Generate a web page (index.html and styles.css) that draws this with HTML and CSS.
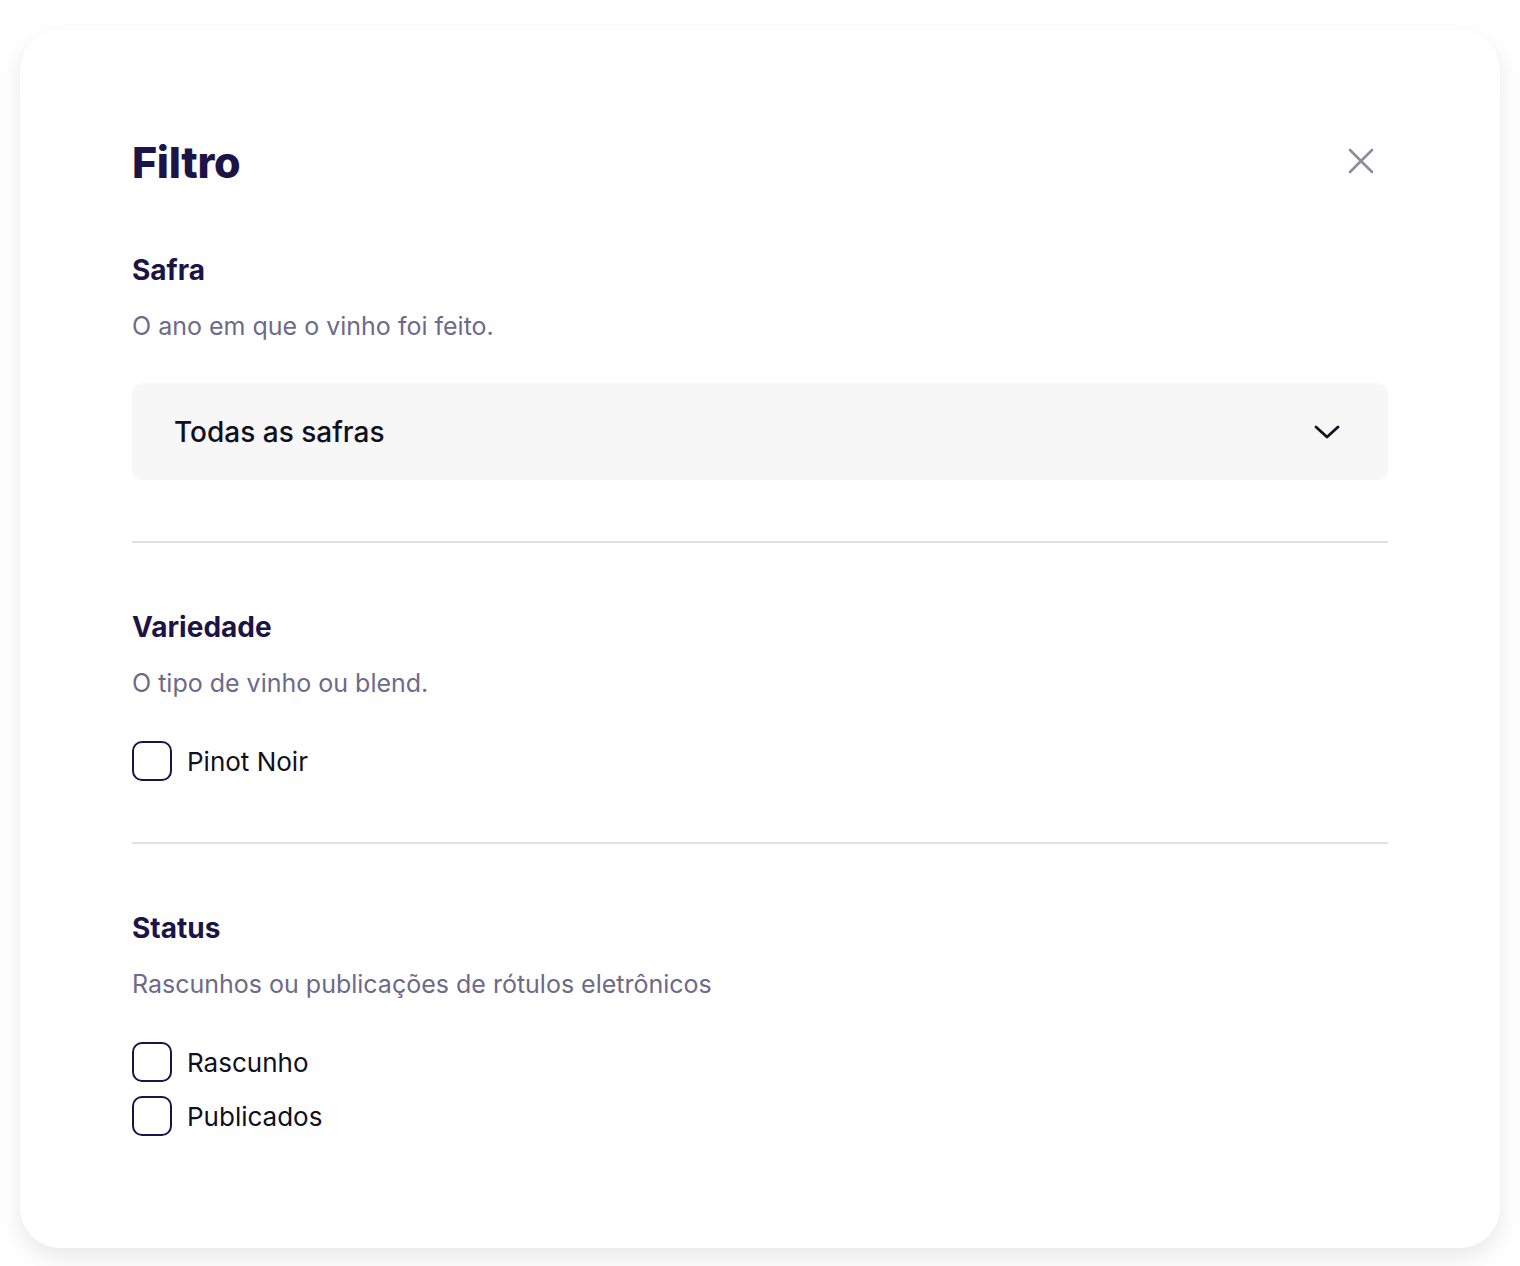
FILE: index.html
```html
<!DOCTYPE html>
<html lang="pt-BR">
<head>
  <meta charset="UTF-8" />
  <meta name="viewport" content="width=device-width, initial-scale=1.0"/>
  <title>Filtro</title>
  <link rel="stylesheet" href="styles.css">
</head>
<body>

  <div class="filter-card">
    <div class="filter-header">
      <h1>Filtro</h1>
      <button class="close-btn" aria-label="Fechar">
        <svg width="28" height="28" viewBox="0 0 28 28" fill="none" stroke="#8e8c9a" stroke-width="2.6" stroke-linecap="round">
          <path d="M3 3 L25 25 M25 3 L3 25"/>
        </svg>
      </button>
    </div>

    <!-- Safra -->
    <div class="filter-section">
      <h2>Safra</h2>
      <p class="hint">O ano em que o vinho foi feito.</p>
      <div class="select-box">
        <span>Todas as safras</span>
        <svg width="26" height="16" viewBox="0 0 26 16" fill="none" stroke="#0f1020" stroke-width="2.8" stroke-linecap="round" stroke-linejoin="round">
          <path d="M2 3 L13 13 L24 3"/>
        </svg>
      </div>
    </div>

    <hr class="divider">

    <!-- Variedade -->
    <div class="filter-section">
      <h2>Variedade</h2>
      <p class="hint">O tipo de vinho ou blend.</p>
      <div class="options">
        <label class="check"><span class="box"></span>Pinot Noir</label>
      </div>
    </div>

    <hr class="divider">

    <!-- Status -->
    <div class="filter-section">
      <h2>Status</h2>
      <p class="hint">Rascunhos ou publicações de rótulos eletrônicos</p>
      <div class="options">
        <label class="check"><span class="box"></span>Rascunho</label>
        <label class="check"><span class="box"></span>Publicados</label>
      </div>
    </div>
  </div>

</body>
</html>
```

FILE: styles.css
```css
body {
  font-family: Inter, "Noto Sans", sans-serif;
  background-color: #ffffff;
  margin: 0;
  padding: 30px 20px 20px;
}

.filter-card {
  background-color: white;
  border-radius: 40px;
  box-shadow: 0 10px 24px rgba(0,0,0,0.09);
  padding: 106px 112px 112px;
}

.filter-header {
  display: flex;
  justify-content: space-between;
  align-items: center;
  height: 52px;
}

h1 {
  margin: 0;
  font-size: 43px;
  font-weight: 800;
  letter-spacing: -0.3px;
  color: #1b1547;
  line-height: 52px;
}

.close-btn {
  background: none;
  border: none;
  padding: 0;
  margin: 0 13px 2px 0;
  cursor: pointer;
  display: flex;
}

.filter-section {
  display: flex;
  flex-direction: column;
}

.filter-header + .filter-section {
  margin-top: 64px;
}

h2 {
  margin: 0;
  font-size: 28px;
  font-weight: 700;
  color: #1b1547;
  line-height: 36px;
}

.hint {
  margin: 22px 0 0;
  font-size: 25px;
  color: #6d6a8a;
  line-height: 32px;
}

.select-box {
  margin-top: 41px;
  height: 97px;
  background-color: #f7f7f7;
  border-radius: 12px;
  padding: 0 48px 0 42px;
  display: flex;
  align-items: center;
  justify-content: space-between;
  font-size: 28px;
  font-weight: 500;
  color: #0f1020;
}

.divider {
  border: none;
  border-top: 2px solid #e1e1e1;
  margin: 61px 0 66px;
}

.options {
  margin-top: 42px;
  display: flex;
  flex-direction: column;
  gap: 14px;
}

.check {
  display: flex;
  align-items: center;
  gap: 15px;
  font-size: 26px;
  color: #0f1020;
  cursor: pointer;
}

.check .box {
  width: 36px;
  height: 36px;
  border: 2px solid #1b1547;
  border-radius: 10px;
}
```
